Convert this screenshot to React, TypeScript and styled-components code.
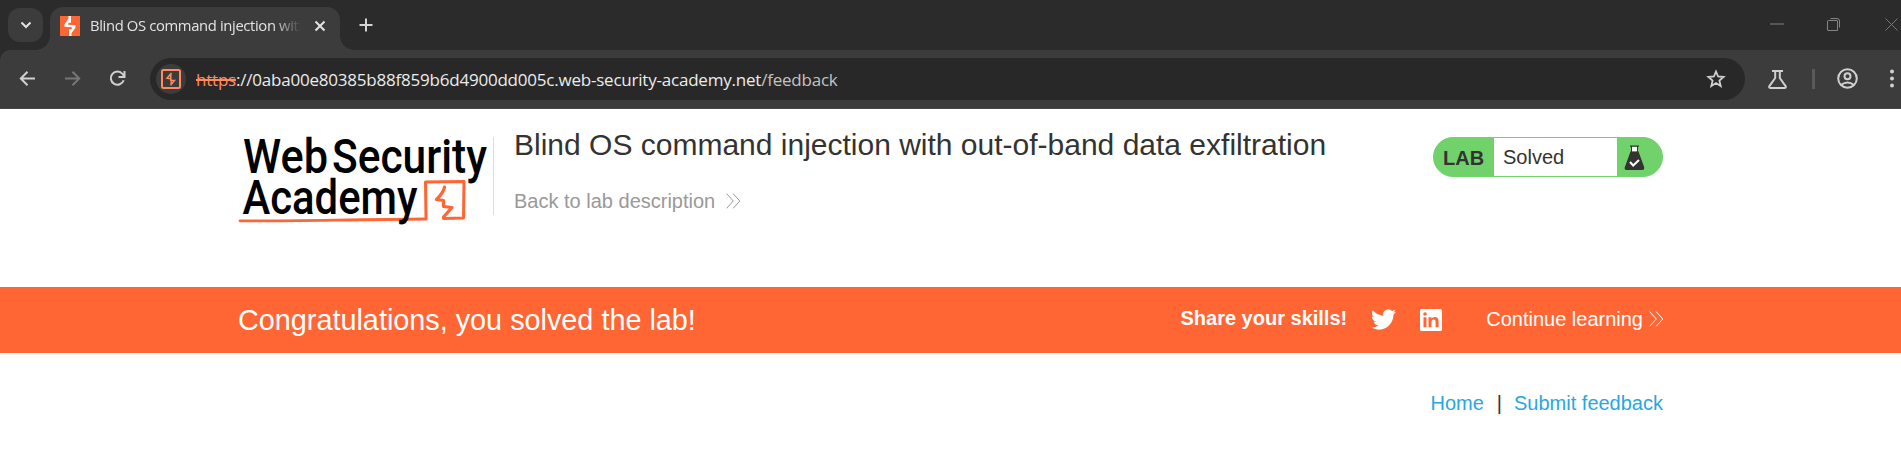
import React from "react";
import styled, { createGlobalStyle } from "styled-components";

const GlobalStyle = createGlobalStyle`
  * { box-sizing: border-box; }
  body { margin: 0; background: #fff; font-family: "Liberation Sans", Arial, sans-serif; color: #333332; overflow: hidden; }
`;

const TabStrip = styled.div`
  display: flex;
  height: 50px;
  background: #2b2b2b;
  font-family: "Open Sans", sans-serif;
`;
const TabSearch = styled.button`
  width: 35px;
  height: 34px;
  margin: 8px 7px 0 8px;
  padding: 0;
  border: 0;
  border-radius: 12px;
  background: #3c3c3c;
  display: grid;
  place-items: center;
`;
const Tab = styled.div`
  position: relative;
  width: 290px;
  height: 43px;
  margin-top: 7px;
  padding: 0 14px 6px 10px;
  border-radius: 13px 13px 0 0;
  background: #3c3c3c;
  display: flex;
  align-items: center;
  &::before, &::after {
    content: "";
    position: absolute;
    bottom: 0;
    width: 14px;
    height: 14px;
  }
  &::before { left: -14px; background: radial-gradient(circle at 0 0, transparent 13.5px, #3c3c3c 14px); }
  &::after { right: -14px; background: radial-gradient(circle at 100% 0, transparent 13.5px, #3c3c3c 14px); }
`;
const TabTitle = styled.span`
  flex: none;
  width: 210px;
  margin-left: 10px;
  padding-bottom: 1px;
  overflow: hidden;
  white-space: nowrap;
  font-size: 14.8px;
  line-height: 24px;
  letter-spacing: -0.36px;
  color: #e3e3e3;
  mask-image: linear-gradient(to right, #000 183px, transparent 211px);
`;
const Grow = styled.div`
  flex: 1;
`;
const Drawing = styled.svg<{ $gap?: number; $drop?: number }>`
  display: block;
  flex: none;
  overflow: visible;
  margin-left: ${(p) => p.$gap ?? 0}px;
  margin-top: ${(p) => p.$drop ?? 0}px;
`;

const Toolbar = styled.div`
  height: 59px;
  display: flex;
  align-items: flex-start;
  background: radial-gradient(circle at 10px 10px, #3c3c3c 9.5px, #2b2b2b 10px) 0 0 / 10px 10px no-repeat, #3c3c3c;
  border-bottom: 1px solid #474545;
  font-family: "Open Sans", sans-serif;
`;
const Omnibox = styled.div`
  width: 1595px;
  height: 42px;
  margin: 8px 0 0 24px;
  padding: 0 19px 0 6px;
  border-radius: 21px;
  background: #282828;
  display: flex;
  align-items: center;
`;
const SiteChip = styled.span`
  width: 30px;
  height: 30px;
  border-radius: 50%;
  background: #3c3c3c;
  display: grid;
  place-items: center;
`;
const Url = styled.span`
  margin-left: 10px;
  padding-top: 1px;
  font-size: 17px;
  line-height: 24px;
  letter-spacing: -0.215px;
  white-space: nowrap;
  color: #ececec;
`;
const Scheme = styled.span`
  color: #ff8b60;
  text-decoration: line-through;
  text-decoration-thickness: 2px;
`;
const Path = styled.span`
  color: #c3c3c3;
`;
const Divider = styled.i`
  width: 3px;
  height: 20px;
  margin: 19px 0 0 25px;
  background: #5a5a5a;
`;

const Container = styled.div`
  width: 1425px;
  margin: 0 auto;
  display: flex;
`;
const Header = styled.header`
  height: 178px;
`;
const LabHead = styled.div`
  height: 78px;
  margin-top: 28px;
  padding-left: 20px;
  border-left: 1px solid #dededf;
`;
const LabTitle = styled.h2`
  margin: -10px 0 0;
  font-size: 30px;
  line-height: 36px;
  font-weight: 400;
  white-space: nowrap;
`;
const BackLink = styled.a`
  display: flex;
  align-items: center;
  margin-top: 26px;
  font-size: 20px;
  line-height: 24px;
  white-space: nowrap;
  color: #999;
`;
const LabStatus = styled.div`
  width: 230px;
  height: 40px;
  margin-top: 28px;
  border: 1px solid #71d26c;
  border-radius: 20px;
  background: #71d26c;
  display: flex;
  overflow: hidden;
`;
const LabTag = styled.b`
  width: 60px;
  padding-left: 9px;
  font-size: 20px;
  line-height: 40px;
`;
const LabState = styled.span`
  width: 123px;
  padding-left: 9px;
  background: #fff;
  font-size: 20px;
  line-height: 38px;
`;
const Banner = styled.section`
  height: 66px;
  background: #ff6633;
  color: #fff;
`;
const Congrats = styled.p`
  margin: 0;
  font-size: 28.8px;
  line-height: 66px;
  white-space: nowrap;
`;
const Share = styled.b`
  font-size: 20px;
  line-height: 62px;
  white-space: nowrap;
`;
const ContinueLink = styled.a`
  display: flex;
  align-items: center;
  height: 64px;
  margin-left: 44px;
  font-size: 20px;
  white-space: nowrap;
`;
const PageNav = styled.nav`
  display: flex;
  padding-top: 38px;
  font-size: 20px;
  line-height: 24px;
  white-space: nowrap;
`;
const NavLink = styled.a`
  color: #29a7df;
`;
const NavBar = styled.span`
  margin: 0 12px 0 13px;
  color: #333;
`;

const Chevrons = ({ gap }: { gap: number }) => (
  <Drawing $gap={gap} width="14" height="16" viewBox="0 0 14 16" fill="none" stroke="currentColor" strokeWidth="1">
    <path d="M.7.7 7.3 8 .7 15.3M7.2.7 13.8 8l-6.6 7.3" />
  </Drawing>
);

const Logo = () => (
  <Drawing $drop={9} width="255" height="110" viewBox="238 118 255 110">
    <g fill="none" stroke="#ff6633" strokeLinejoin="round" strokeLinecap="round">
      <path d="M240 220.800 C280 221.500 350 219.500 425 219" strokeWidth="2.800" />
      <path d="M426 219 L425.500 182 L464 181.500 L463.500 218 L443.500 218.500" strokeWidth="3" />
      <path d="M444.500 187 Q444 192 436.500 199.500 L443.500 200.500 L443.500 206.500 L452 207.500 L443.500 217" strokeWidth="3.200" />
    </g>
    <g fill="#000" fontFamily="Roboto, sans-serif" fontWeight="500" fontSize="47.5">
      <text x="243" y="173" textLength="85" lengthAdjust="spacingAndGlyphs">Web</text>
      <text x="332" y="173" textLength="155" lengthAdjust="spacingAndGlyphs">Security</text>
      <text x="242.500" y="214" textLength="175" lengthAdjust="spacingAndGlyphs">Academy</text>
    </g>
  </Drawing>
);

export default function App() {
  return (
    <>
      <GlobalStyle />
      <TabStrip>
        <TabSearch>
          <Drawing width="12" height="8" viewBox="0 0 12 8" fill="none" stroke="#e3e3e3" strokeWidth="2">
            <path d="M1.500 1.500 6 6l4.500-4.500" />
          </Drawing>
        </TabSearch>
        <Tab>
          <Drawing width="20" height="20" viewBox="0 0 20 20">
            <path fill="#ff6633" d="M0 0h20v20H0z" />
            <path fill="#fff" d="M8.500 0H11V6.800H8.500L8 8.800 15.600 9.300 15.300 12 11.500 17V20H9V13.200H11.700L11.900 11.200 4.400 10.800 4.500 8.200 8.500 2.500z" />
          </Drawing>
          <TabTitle>Blind OS command injection with out-of-band</TabTitle>
          <Drawing $gap={14} width="12" height="12" viewBox="0 0 12 12" fill="none" stroke="#e3e3e3" strokeWidth="2">
            <path d="m1.500 1.500 9 9m0-9-9 9" />
          </Drawing>
        </Tab>
        <Drawing $gap={19} $drop={18} width="14" height="14" viewBox="0 0 14 14" stroke="#d4d4d4" strokeWidth="2">
          <path d="M7 .500v13M.500 7h13" />
        </Drawing>
        <Grow />
        <Drawing $drop={23} width="14" height="2" viewBox="0 0 14 2">
          <path fill="#565656" d="M0 0h14v2H0z" />
        </Drawing>
        <Drawing $gap={43} $drop={18} width="13" height="13" viewBox="0 0 13 13" fill="none" stroke="#858585">
          <path d="M1.500 2.500h8.500a.500.500 0 0 1 .500.500v9.500H1a.500.500 0 0 1-.500-.500V3z" />
          <path d="M3.500.500H10a2.500 2.500 0 0 1 2.500 2.500v6.500" />
        </Drawing>
        <Drawing $gap={45} $drop={18} width="16" height="13" viewBox="0 0 16 13" stroke="#777">
          <path d="m.500.500 12 12m0-12-12 12" />
        </Drawing>
      </TabStrip>
      <Toolbar>
        <Drawing $gap={19} $drop={20} width="17" height="17" viewBox="0 0 17 17" fill="none" stroke="#d0d0d0" strokeWidth="2">
          <path d="M16 8.500H2M8.500 1.700 1.800 8.500l6.700 6.800" />
        </Drawing>
        <Drawing $gap={28} $drop={20} width="17" height="17" viewBox="0 0 17 17" fill="none" stroke="#767676" strokeWidth="2">
          <path d="M1 8.500h14M8.500 1.700l6.700 6.800-6.700 6.800" />
        </Drawing>
        <Drawing $gap={28} $drop={20} width="17" height="17" viewBox="0 0 17 17" fill="none" stroke="#d0d0d0" strokeWidth="2">
          <path d="M14.700 10.200A6.600 6.600 0 1 1 13.600 4l1.700 2.300M15.500 1v6H9.500" />
        </Drawing>
        <Omnibox>
          <SiteChip>
            <Drawing width="20" height="20" viewBox="0 0 20 20" fill="none" stroke="#ff8b60" strokeWidth="2">
              <rect x="1" y="1" width="18" height="18" rx="1.500" />
              <path strokeWidth="1.500" d="M10.500 4 6 9.300l3.800.500V11.200l3.700.300-4 4.700M9.800 5v5M10.200 10.500v5" />
            </Drawing>
          </SiteChip>
          <Url>
            <Scheme>https</Scheme>://0aba00e80385b88f859b6d4900dd005c.web-security-academy.net<Path>/feedback</Path>
          </Url>
          <Grow />
          <Drawing width="20" height="20" viewBox="0 0 20 20" fill="none" stroke="#d0d0d0" strokeWidth="1.800">
            <path d="m10 2.500 2.100 5 5.500.5-4.200 3.600 1.300 5.400L10 14.100 5.300 17l1.300-5.400L2.400 8l5.500-.5z" />
          </Drawing>
        </Omnibox>
        <Drawing $gap={23} $drop={20} width="19" height="19" viewBox="0 0 19 19" fill="none" stroke="#d0d0d0" strokeWidth="2">
          <path d="M4 1h11M7.200 1v7L1.200 16.500Q1 18 2.500 18h14q1.500 0 1.300-1.500L11.800 8V1" />
        </Drawing>
        <Divider />
        <Drawing $gap={22} $drop={18} width="21" height="21" viewBox="0 0 21 21" fill="none" stroke="#d0d0d0" strokeWidth="2">
          <circle cx="10.500" cy="10.500" r="9.300" />
          <circle cx="10.500" cy="8.300" r="3" />
          <path d="M4 17q6.500-5 13 0" />
        </Drawing>
        <Drawing $gap={31} $drop={19} width="6" height="19" viewBox="0 0 6 19" fill="#d0d0d0">
          <circle cx="3" cy="2.500" r="2" />
          <circle cx="3" cy="9.500" r="2" />
          <circle cx="3" cy="16.500" r="2" />
        </Drawing>
      </Toolbar>

      <Header>
        <Container>
          <Logo />
          <LabHead>
            <LabTitle>Blind OS command injection with out-of-band data exfiltration</LabTitle>
            <BackLink>
              Back to lab description
              <Chevrons gap={11} />
            </BackLink>
          </LabHead>
          <Grow />
          <LabStatus>
            <LabTag>LAB</LabTag>
            <LabState>Solved</LabState>
            <Drawing $gap={7} $drop={7} width="21" height="26" viewBox="0 0 21 26">
              <path fill="#fff" d="M7 1.500h7v5H7z" />
              <path fill="#333332" d="M6 .500h9v1.300h-1V6.500h.5L20.300 22.500Q20.500 25 18.500 25h-16Q.300 25 .700 22.500L6.500 6.500H7V1.800H6zM8 1.800v4.700h5V1.800z" fillRule="evenodd" />
              <path fill="none" stroke="#fff" strokeWidth="2" d="m6 17 3.200 3.500L15 15" />
            </Drawing>
          </LabStatus>
        </Container>
      </Header>

      <Banner>
        <Container>
          <Congrats>Congratulations, you solved the lab!</Congrats>
          <Grow />
          <Share>Share your skills!</Share>
          <Drawing $gap={24} $drop={20} width="25" height="25" viewBox="0 0 24 24" fill="#fff">
            <path d="M23.950 4.570a10 10 0 0 1-2.820.780 4.960 4.960 0 0 0 2.160-2.720c-.950.550-2 .950-3.120 1.180a4.920 4.920 0 0 0-8.390 4.490C7.690 8.090 4.070 6.130 1.640 3.160a4.820 4.820 0 0 0-.670 2.480c0 1.710.870 3.210 2.190 4.100a4.900 4.900 0 0 1-2.230-.620v.060a4.920 4.920 0 0 0 3.950 4.830 5 5 0 0 1-2.210.080 4.940 4.940 0 0 0 4.600 3.420A9.870 9.870 0 0 1 0 19.540a13.990 13.990 0 0 0 7.550 2.210c9.050 0 14-7.500 14-13.980 0-.210 0-.420-.020-.630a9.940 9.940 0 0 0 2.420-2.570z" />
          </Drawing>
          <Drawing $gap={24} $drop={22} width="22" height="22" viewBox="0 0 22 22">
            <rect width="22" height="22" rx="1.500" fill="#fff" />
            <path fill="#ff6633" d="M3.500 8.200h3v10h-3zM8.500 8.200h3v1.400q1-1.600 3.100-1.600 4 0 4 4.400v5.800h-3v-5.300q0-2.400-1.900-2.400-2.200 0-2.200 2.700v5h-3z" />
            <circle cx="5" cy="5" r="1.800" fill="#ff6633" />
          </Drawing>
          <ContinueLink>
            Continue learning
            <Chevrons gap={6} />
          </ContinueLink>
        </Container>
      </Banner>

      <Container>
        <Grow />
        <PageNav>
          <NavLink>Home</NavLink>
          <NavBar>|</NavBar>
          <NavLink>Submit feedback</NavLink>
        </PageNav>
      </Container>
    </>
  );
}
